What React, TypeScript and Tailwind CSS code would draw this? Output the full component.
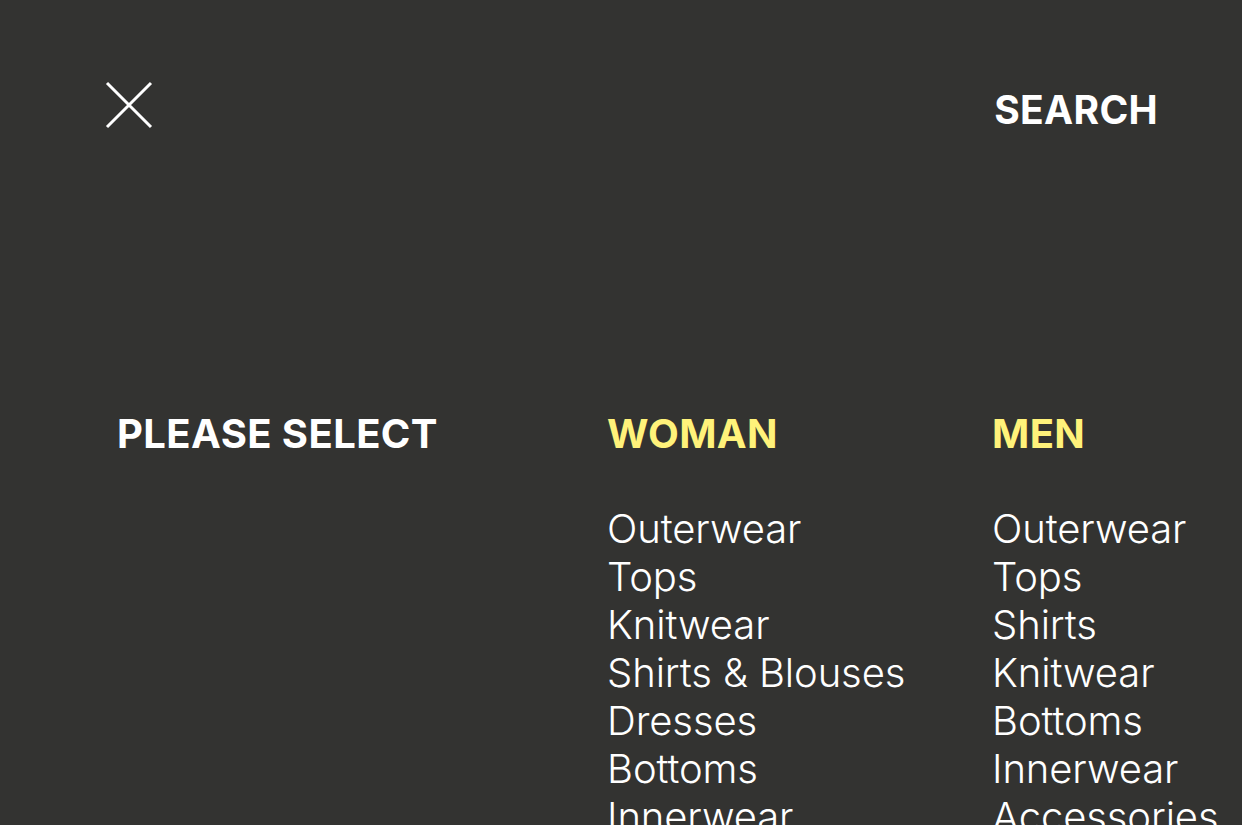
const woman = ['Outerwear', 'Tops', 'Knitwear', 'Shirts & Blouses', 'Dresses', 'Bottoms', 'Innerwear', 'Accessories'];
const men = ['Outerwear', 'Tops', 'Shirts', 'Knitwear', 'Bottoms', 'Innerwear', 'Accessories'];

function CloseIcon() {
  return (
    <svg width="48" height="48" viewBox="0 0 48 48" fill="none" stroke="currentColor" strokeWidth="3">
      <path d="M2 2L46 46M46 2L2 46" />
    </svg>
  );
}

function Column({ title, items }: { title: string; items: string[] }) {
  return (
    <div className="flex flex-col">
      <h2 className="text-[40px] leading-[44px] font-bold text-[#fff27a] tracking-[0.4px]">{title}</h2>
      <ul className="mt-[49px] flex flex-col">
        {items.map((item, i) => (
          <li key={i} className="text-[40px] leading-[48px] font-light text-white tracking-[-0.1px]">
            {item}
          </li>
        ))}
      </ul>
    </div>
  );
}

export default function App() {
  return (
    <div
      className="w-[1242px] h-[825px] overflow-hidden bg-[#333331] text-white"
      style={{ fontFamily: 'Inter, "Liberation Sans", sans-serif' }}
    >
      <header className="flex items-start justify-between pl-[105px] pr-[84px] pt-[81px]">
        <button className="text-white">
          <CloseIcon />
        </button>
        <span className="mt-[7px] text-[39px] leading-[44px] font-bold tracking-[0.3px]">SEARCH</span>
      </header>
      <main className="mt-[280px] flex">
        <div className="w-[607px] pl-[117px]">
          <h2 className="text-[40px] leading-[44px] font-bold tracking-[0.4px]">PLEASE SELECT</h2>
        </div>
        <div className="w-[385px]">
          <Column title="WOMAN" items={woman} />
        </div>
        <Column title="MEN" items={men} />
      </main>
    </div>
  );
}
